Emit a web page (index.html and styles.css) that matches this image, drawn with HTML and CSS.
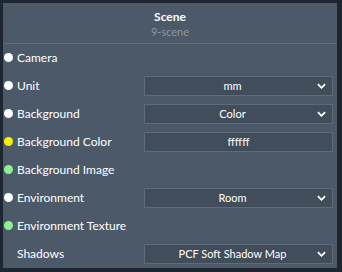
FILE: index.html
```html
<!DOCTYPE html>
<html>
<head>
  <title>Scene</title>
  <link rel="stylesheet" href="styles.css">
</head>
<body>
  <div class="panel">
    <div class="panel-header">
      <div class="panel-title">Scene</div>
      <div class="panel-subtitle">9-scene</div>
    </div>

    <div class="row">
      <span class="dot white"></span>
      <span class="label">Camera</span>
    </div>
    <div class="row">
      <span class="dot white"></span>
      <span class="label">Unit</span>
      <div class="select">mm<svg class="chevron" viewBox="0 0 10 6"><polyline points="1,1 5,5 9,1"/></svg></div>
    </div>
    <div class="row">
      <span class="dot white"></span>
      <span class="label">Background</span>
      <div class="select">Color<svg class="chevron" viewBox="0 0 10 6"><polyline points="1,1 5,5 9,1"/></svg></div>
    </div>
    <div class="row">
      <span class="dot yellow"></span>
      <span class="label">Background Color</span>
      <div class="input">ffffff</div>
    </div>
    <div class="row">
      <span class="dot green"></span>
      <span class="label">Background Image</span>
    </div>
    <div class="row">
      <span class="dot white"></span>
      <span class="label">Environment</span>
      <div class="select">Room<svg class="chevron" viewBox="0 0 10 6"><polyline points="1,1 5,5 9,1"/></svg></div>
    </div>
    <div class="row">
      <span class="dot green"></span>
      <span class="label">Environment Texture</span>
    </div>
    <div class="row">
      <span class="dot"></span>
      <span class="label">Shadows</span>
      <div class="select">PCF Soft Shadow Map<svg class="chevron" viewBox="0 0 10 6"><polyline points="1,1 5,5 9,1"/></svg></div>
    </div>
  </div>
</body>
</html>
```

FILE: styles.css
```css
body {
  margin: 0;
  padding: 3px;
  background-color: #1e2631;
  font-family: Lato, "Open Sans", sans-serif;
  color: #fff;
}

.panel {
  width: 334px;
  height: 265px;
  background-color: #4c5968;
  box-sizing: border-box;
}

.panel-header {
  height: 41px;
  border-bottom: 1px solid #5f6d7c;
  text-align: center;
  padding-top: 7px;
  box-sizing: border-box;
}

.panel-title {
  font-size: 12px;
  font-weight: bold;
  line-height: 14px;
}

.panel-subtitle {
  font-size: 11px;
  line-height: 16px;
  color: #8b98a6;
}

.row {
  display: flex;
  align-items: center;
  height: 28px;
  padding: 0 4px 1px 1px;
  box-sizing: border-box;
}

.dot {
  width: 9px;
  height: 9px;
  border-radius: 50%;
  margin-right: 4px;
  flex-shrink: 0;
}

.dot.white {
  background-color: #fff;
}

.dot.yellow {
  background-color: #f4f000;
}

.dot.green {
  background-color: #8ff08f;
}

.label {
  font-size: 12px;
  flex: 1;
}

.select, .input {
  position: relative;
  width: 189px;
  height: 20px;
  box-sizing: border-box;
  background-color: #414d5a;
  border: 1px solid #5d6b7a;
  font-size: 11px;
  line-height: 18px;
  text-align: center;
}

.select {
  padding-right: 12px;
}

.chevron {
  position: absolute;
  right: 6px;
  top: 6px;
  width: 9px;
  height: 6px;
  fill: none;
  stroke: #fff;
  stroke-width: 2;
}
```
